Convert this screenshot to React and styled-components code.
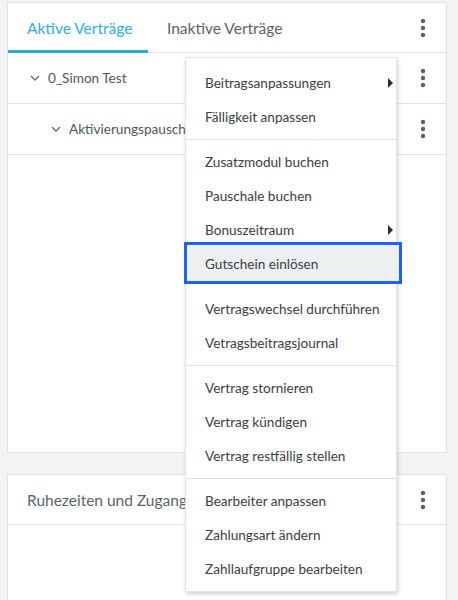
import React from 'react'
import styled, { createGlobalStyle } from 'styled-components'

const GlobalStyle = createGlobalStyle`
  html, body {
    margin: 0;
    padding: 0;
    background: #f2f3f5;
    font-family: 'Lato', 'Open Sans', sans-serif;
  }
`

const menuSections = [
  [
    { label: 'Beitragsanpassungen', sub: true },
    { label: 'Fälligkeit anpassen' },
  ],
  [
    { label: 'Zusatzmodul buchen' },
    { label: 'Pauschale buchen' },
    { label: 'Bonuszeitraum', sub: true },
    { label: 'Gutschein einlösen', focused: true },
    { label: 'Vertragswechsel durchführen' },
    { label: 'Vetragsbeitragsjournal' },
  ],
  [
    { label: 'Vertrag stornieren' },
    { label: 'Vertrag kündigen' },
    { label: 'Vertrag restfällig stellen' },
  ],
  [
    { label: 'Bearbeiter anpassen' },
    { label: 'Zahlungsart ändern' },
    { label: 'Zahllaufgruppe bearbeiten' },
  ],
]

export default () => {
  return (
    <>
      <GlobalStyle />
      <Page>
        <Card $height={451}>
          <Header>
            <Tab $active>Aktive Verträge</Tab>
            <Tab>Inaktive Verträge</Tab>
            <Spacer />
            <Kebab />
          </Header>
          <Row>
            <Chevron $indent={22} />
            <RowLabel>0_Simon Test</RowLabel>
            <Spacer />
            <Kebab />
          </Row>
          <Row>
            <Chevron $indent={43} />
            {/* the menu covers the rest of this label */}
            <RowLabel $clip={116}>Aktivierungspauschale</RowLabel>
            <Spacer />
            <Kebab />
          </Row>
        </Card>
        <Card $height={140}>
          <Header>
            <Title>Ruhezeiten und Zugangszeiten</Title>
            <Spacer />
            <Kebab />
          </Header>
        </Card>

        <Menu>
          {menuSections.map((section, i) => (
            <Section key={i}>
              {section.map((item) => (
                <Item key={item.label} $focused={item.focused}>
                  {item.label}
                  {item.sub && <Caret />}
                </Item>
              ))}
            </Section>
          ))}
        </Menu>
      </Page>
    </>
  )
}

const Kebab = () => (
  <KebabButton>
    <svg width="6" height="20" viewBox="0 0 6 20">
      <circle cx="3" cy="3" r="2.2" fill="#56626e" />
      <circle cx="3" cy="10" r="2.2" fill="#56626e" />
      <circle cx="3" cy="17" r="2.2" fill="#56626e" />
    </svg>
  </KebabButton>
)

const Chevron = ({ $indent }) => (
  <ChevronBox $indent={$indent}>
    <svg width="10" height="6" viewBox="0 0 10 6">
      <path d="M1 1 L5 5 L9 1" fill="none" stroke="#5f6a75" strokeWidth="1.3" />
    </svg>
  </ChevronBox>
)

const Page = styled.div`
  position: relative;
  padding: 2px 11px 0 7px;
  display: flex;
  flex-direction: column;
  gap: 21px;
  height: 598px;
  overflow: hidden;
`

const Card = styled.div`
  background: #fff;
  border: 1px solid #dfe2e6;
  height: ${(p) => p.$height}px;
  flex-shrink: 0;
  box-sizing: border-box;
`

const Header = styled.div`
  display: flex;
  align-items: center;
  height: 50px;
  border-bottom: 1px solid #dfe2e6;
  box-sizing: border-box;
`

const Tab = styled.div`
  height: 50px;
  display: flex;
  align-items: center;
  flex-shrink: 0;
  white-space: nowrap;
  padding: 2px 0 0 19px;
  width: ${(p) => (p.$active ? '140px' : 'auto')};
  box-sizing: border-box;
  font-size: 15.5px;
  color: ${(p) => (p.$active ? '#2fb0e3' : '#5a636d')};
  border-bottom: 3px solid ${(p) => (p.$active ? '#25aae1' : 'transparent')};
  margin-bottom: -1px;
`

const Title = styled.div`
  padding-left: 19px;
  width: 177px;
  flex-shrink: 0;
  box-sizing: border-box;
  overflow: hidden;
  white-space: nowrap;
  font-size: 15.5px;
  color: #5a636d;
`

const Spacer = styled.div`
  flex: 1;
`

const KebabButton = styled.div`
  width: 20px;
  display: flex;
  justify-content: center;
  margin-right: 13px;
`

const Row = styled.div`
  display: flex;
  align-items: center;
  height: 51px;
  border-bottom: 1px solid #dfe2e6;
  box-sizing: border-box;
`

const ChevronBox = styled.div`
  margin-left: ${(p) => p.$indent}px;
  margin-right: 8px;
  display: flex;
`

const RowLabel = styled.div`
  font-size: 13.6px;
  color: #4d5761;
  white-space: nowrap;
  overflow: hidden;
  ${(p) => p.$clip && `width: ${p.$clip}px;`}
`

const Menu = styled.div`
  position: absolute;
  left: 185px;
  top: 57px;
  width: 212px;
  height: 535px;
  background: #fff;
  border: 1px solid #e2e4e7;
  box-sizing: border-box;
  box-shadow: 1px 2px 4px rgba(0, 0, 0, 0.18);
  padding-top: 8px;
`

const Section = styled.div`
  padding: 0 0 5px;
  & + & {
    border-top: 1px solid #dfe2e5;
    padding-top: 5px;
  }
`

const Item = styled.div`
  position: relative;
  display: flex;
  align-items: center;
  height: 34px;
  padding-left: 19px;
  font-size: 13.6px;
  color: #3b4046;
  white-space: nowrap;
  box-sizing: border-box;
  ${(p) =>
    p.$focused &&
    `
    height: 42px;
    margin: -5px -6px 8px -2px;
    padding-left: 18px;
    padding-top: 1px;
    border: 3px solid #1f60f5;
    background: #edf0f0;
  `}
`

const Caret = styled.span`
  position: absolute;
  right: 3px;
  top: 50%;
  margin-top: -5px;
  width: 0;
  height: 0;
  border-top: 5px solid transparent;
  border-bottom: 5px solid transparent;
  border-left: 5px solid #2a2d31;
`
